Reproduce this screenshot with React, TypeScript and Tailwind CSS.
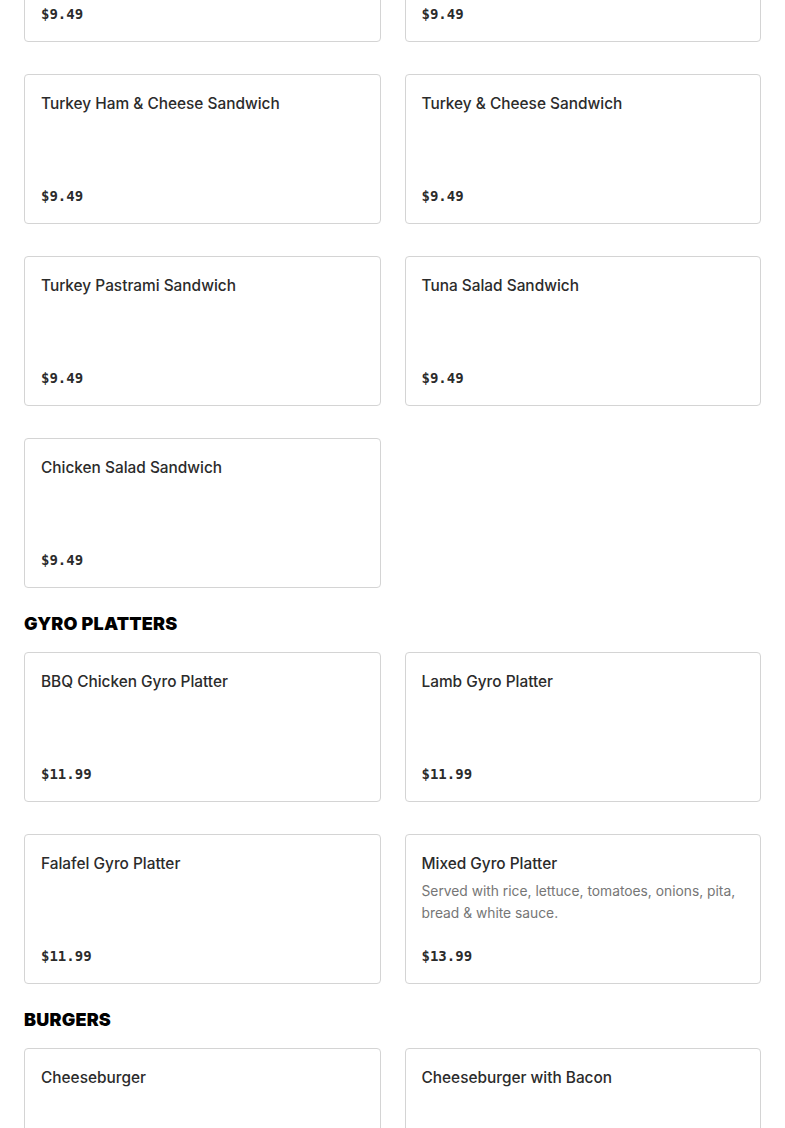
type Item = {
  name: string;
  price: string;
  description?: string;
};

type Section = {
  title?: string;
  items: Item[];
};

const sections: Section[] = [
  {
    items: [
      { name: "Ham & Cheese Sandwich", price: "$9.49" },
      { name: "Roast Beef Sandwich", price: "$9.49" },
      { name: "Turkey Ham & Cheese Sandwich", price: "$9.49" },
      { name: "Turkey & Cheese Sandwich", price: "$9.49" },
      { name: "Turkey Pastrami Sandwich", price: "$9.49" },
      { name: "Tuna Salad Sandwich", price: "$9.49" },
      { name: "Chicken Salad Sandwich", price: "$9.49" },
    ],
  },
  {
    title: "GYRO PLATTERS",
    items: [
      { name: "BBQ Chicken Gyro Platter", price: "$11.99" },
      { name: "Lamb Gyro Platter", price: "$11.99" },
      { name: "Falafel Gyro Platter", price: "$11.99" },
      {
        name: "Mixed Gyro Platter",
        price: "$13.99",
        description:
          "Served with rice, lettuce, tomatoes, onions, pita, bread & white sauce.",
      },
    ],
  },
  {
    title: "BURGERS",
    items: [
      { name: "Cheeseburger", price: "$8.99" },
      { name: "Cheeseburger with Bacon", price: "$9.99" },
    ],
  },
];

function MenuCard({ name, price, description }: Item) {
  return (
    <div className="flex h-[150px] flex-col justify-between rounded border border-[#d4d4d4] bg-white px-4 pt-[17px] pb-[17px]">
      <div>
        <h3 className="text-[15.4px] leading-6 font-medium text-[#2b2b2b] [font-family:Inter,'Noto_Sans',sans-serif]">
          {name}
        </h3>
        {description && (
          <p className="mt-1 text-[13.8px] leading-[22px] text-[#767676] [font-family:Inter,'Noto_Sans',sans-serif]">
            {description}
          </p>
        )}
      </div>
      <div className="text-[14px] leading-5 font-bold text-[#2b2b2b] [font-family:'DejaVu_Sans_Mono',monospace]">
        {price}
      </div>
    </div>
  );
}

export default function App() {
  return (
    <div className="h-[1128px] overflow-hidden bg-white">
      <div className="-mt-[108px] px-6">
        {sections.map((section, i) => (
          <section key={i}>
            {section.title && (
              <h2 className="mt-6 mb-4 text-[18px] leading-6 font-black tracking-[0.2px] text-black [font-family:Inter,'Liberation_Sans',sans-serif]">
                {section.title}
              </h2>
            )}
            <div className="grid grid-cols-2 gap-x-6 gap-y-8">
              {section.items.map((item) => (
                <MenuCard key={item.name} {...item} />
              ))}
            </div>
          </section>
        ))}
      </div>
    </div>
  );
}
